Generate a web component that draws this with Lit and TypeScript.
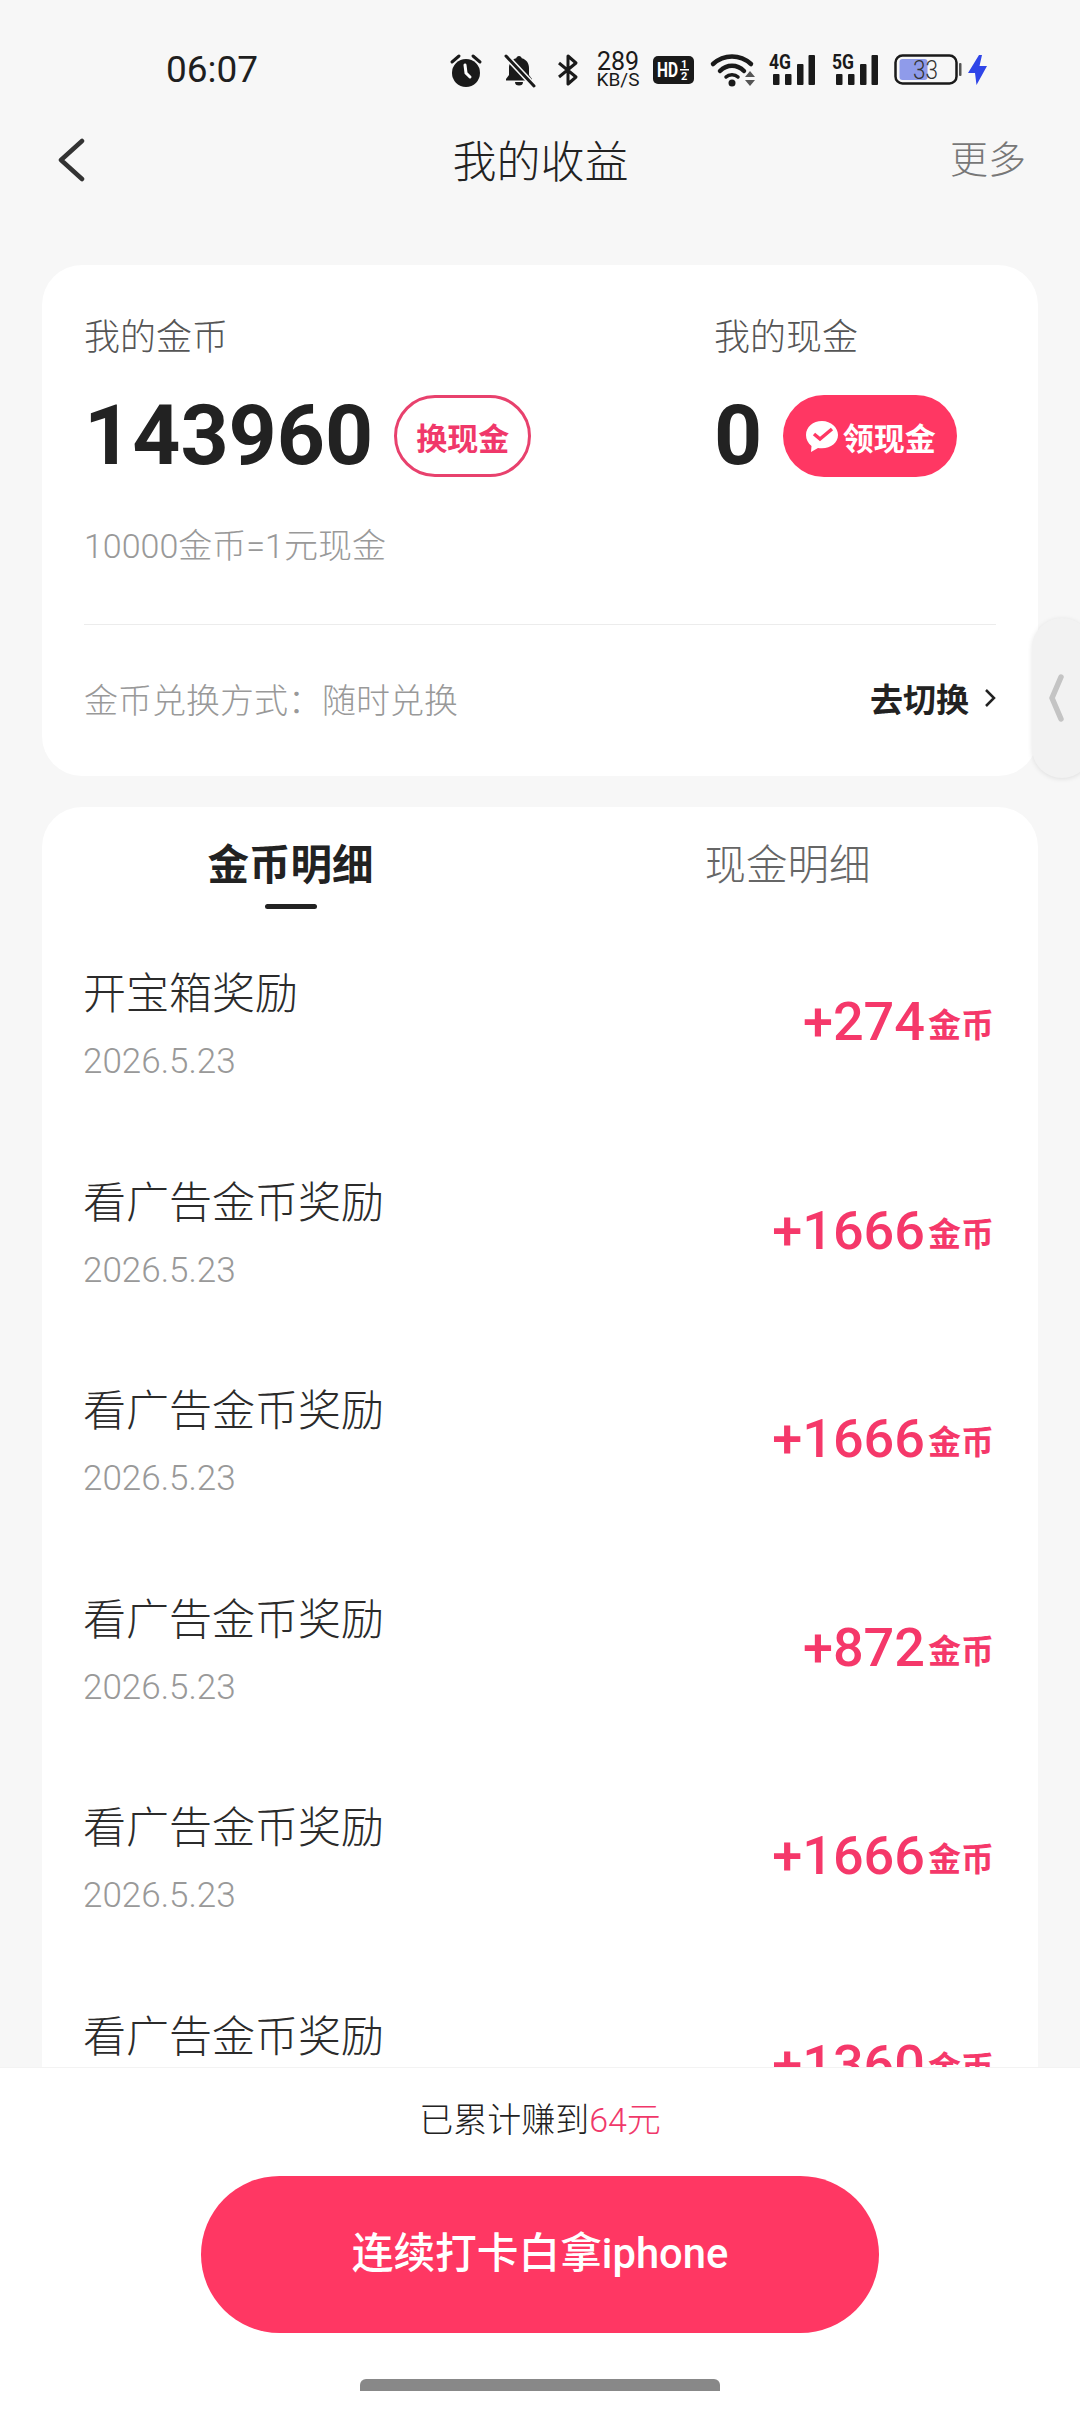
import { LitElement, html, css } from "lit";
import { customElement } from "lit/decorators.js";

const rows = [
  ["开宝箱奖励", "+274"],
  ["看广告金币奖励", "+1666"],
  ["看广告金币奖励", "+1666"],
  ["看广告金币奖励", "+872"],
  ["看广告金币奖励", "+1666"],
  ["看广告金币奖励", "+1360"],
];

const signal = (label: string, cls: string) => html`<svg class="sig ${cls}" width="46" height="32" viewBox="0 0 46 32">
  <text x="0" y="15" font-family="Roboto" font-weight="700" font-size="20" textLength="22" lengthAdjust="spacingAndGlyphs" fill="#1a1a1a">${label}</text>
  <rect x="4" y="20" width="6.500" height="11" rx="1" fill="#1a1a1a"/>
  <rect x="16" y="20" width="6.500" height="11" rx="1" fill="#1a1a1a"/>
  <rect x="28" y="10" width="6.500" height="21" rx="1" fill="#1a1a1a"/>
  <rect x="39.500" y="1" width="6.500" height="30" rx="1" fill="#1a1a1a"/>
</svg>`;

@customElement("app-root")
export class AppRoot extends LitElement {
  static styles = css`
    :host {
      display: flex;
      flex-direction: column;
      position: relative;
      width: 1080px;
      height: 2412px;
      overflow: hidden;
      background: #f7f7f7;
      font-family: Roboto, "Noto Sans CJK SC", sans-serif;
      color: #333;
    }
    .status {
      height: 108px;
      flex: none;
      display: flex;
      align-items: center;
      padding: 32px 0 0 166px;
      box-sizing: border-box;
    }
    .time { font-size: 37px; color: #1f1f1f; width: 284px; line-height: 40px; }
    .sicons { display: flex; align-items: center; height: 40px; }
    .sicons svg { display: block; flex: none; overflow: visible; }
    .sig.a { margin-left: 13px; }
    .sig.b { margin-left: 17px; }
    .bell { margin-left: 21px; }
    .bt { margin-left: 21px; }
    .wifi { margin-left: 17px; }
    .batt { margin-left: 16px; }
    .speed { width: 42px; margin: 0 14px 0 18px; color: #1a1a1a; text-align: center; display: flex; flex-direction: column; align-items: center; }
    .speed b { font-weight: 400; font-size: 25px; line-height: 20px; }
    .speed i { font-style: normal; font-size: 19px; line-height: 16px; white-space: nowrap; }
    .nav {
      height: 104px;
      flex: none;
      display: grid;
      grid-template-columns: 1fr auto 1fr;
      align-items: center;
      padding: 0 54px 0 58px;
    }
    .nav h1 { margin: 0 3px 3px 0; font-size: 44px; font-weight: 300; color: #222; }
    .more { justify-self: end; font-size: 38px; color: #777; font-weight: 300; margin-bottom: 8px; }
    .scroll { flex: 1; min-height: 0; overflow: hidden; padding: 53px 42px 0; }
    .card { background: #fff; border-radius: 40px; }
    .summary { height: 511px; box-sizing: border-box; padding: 49px 42px 0; }
    .cols { display: grid; grid-template-columns: 630px 1fr; }
    .label { font-size: 36px; font-weight: 300; color: #555; line-height: 48px; }
    .val { display: flex; align-items: center; height: 82px; margin-top: 33px; }
    .num { font-size: 84px; font-weight: 700; color: #222; line-height: 82px; }
    .pill {
      height: 82px;
      border-radius: 41px;
      box-sizing: border-box;
      display: flex;
      align-items: center;
      justify-content: center;
      font-size: 31px;
      font-weight: 700;
    }
    .outline { width: 137px; margin-left: 21px; border: 3px solid #e8416d; color: #f0386a; }
    .solid { width: 174px; margin-left: 21px; background: #ff3763; color: #fff; gap: 4px; }
    .hint { font-size: 34px; font-weight: 300; color: #999; line-height: 44px; margin-top: 47px; }
    .divider { height: 1px; background: #ececec; margin-top: 56px; }
    .foot { display: flex; justify-content: space-between; align-items: center; height: 146px; }
    .foot .mode { font-size: 34px; font-weight: 300; color: #999; }
    .switch { display: flex; align-items: center; gap: 15px; font-size: 33px; font-weight: 700; color: #222; }
    .detail { margin-top: 31px; height: 1400px; }
    .tabs { display: grid; grid-template-columns: 1fr 1fr; text-align: center; padding-top: 35px; margin-right: 2px; }
    .tab { font-size: 41.500px; font-weight: 300; color: #666; line-height: 48px; height: 67px; position: relative; }
    .tab.on { font-weight: 700; color: #222; }
    .tab.on::after {
      content: "";
      position: absolute;
      left: 50%;
      bottom: 0;
      transform: translateX(-50%);
      width: 52px;
      height: 5px;
      border-radius: 3px;
      background: #222;
    }
    .row {
      height: 208.6px;
      box-sizing: border-box;
      padding: 57px 44px 0 41px;
      display: flex;
      justify-content: space-between;
    }
    .row h3 { margin: 0; font-size: 43px; font-weight: 300; color: #2b2b2b; line-height: 56px; }
    .row .date { font-size: 35px; font-weight: 300; color: #999; line-height: 40px; margin-top: 20px; }
    .amt { display: flex; align-items: baseline; color: #f5386a; align-self: flex-start; margin-top: 24px; line-height: 64px; }
    .amt b { font-size: 54px; font-weight: 500; }
    .amt span { font-size: 33px; font-weight: 700; margin-left: 3px; transform: translateY(-3px); }
    .bottom {
      flex: none;
      height: 345px;
      background: #fff;
      border-top: 1px solid #f3f3f3;
      box-sizing: border-box;
      display: flex;
      flex-direction: column;
      align-items: center;
    }
    .total { font-size: 34px; font-weight: 300; color: #222; line-height: 44px; margin-top: 30px; }
    .total em { font-style: normal; color: #f0386a; }
    .cta {
      width: 678px;
      height: 157px;
      margin-top: 34px;
      padding-bottom: 9px;
      box-sizing: border-box;
      border-radius: 79px;
      background: #ff3763;
      color: #fff;
      display: flex;
      align-items: center;
      justify-content: center;
      font-size: 41.700px;
      font-weight: 500;
    }
    .home { width: 360px; height: 12px; margin-top: 46px; background: #888; border-radius: 6px 6px 0 0; }
    .side {
      position: absolute;
      left: 1032px;
      top: 618px;
      width: 60px;
      height: 160px;
      box-sizing: border-box;
      background: #f2f2f2;
      border-radius: 30px;
      box-shadow: 0 1px 5px rgba(0, 0, 0, 0.1);
      display: flex;
      align-items: center;
      padding-left: 16px;
    }
  `;

  render() {
    return html`
      <div class="status">
        <div class="time">06:07</div>
        <div class="sicons">
          <svg width="32" height="34" viewBox="0 0 32 34">
            <circle cx="16" cy="20" r="14" fill="#1a1a1a"/>
            <path d="M2 9 9 3M30 9 23 3" stroke="#1a1a1a" stroke-width="3" stroke-linecap="round"/>
            <path d="M15 12 16 20 20 24" stroke="#fff" stroke-width="3" fill="none" stroke-linecap="round"/>
          </svg>
          <svg class="bell" width="33" height="33" viewBox="0 0 33 33">
            <path d="M16 2c1.500 0 2.500 1 2.800 2.300C23.500 5.500 26 9.500 26 14v7l3 4v1.500H3V25l3-4v-7c0-4.500 2.500-8.500 7.200-9.700C13.500 3 14.500 2 16 2z" fill="#1a1a1a"/>
            <path d="M12 28h8a4 3.500 0 0 1-8 0z" fill="#1a1a1a"/>
            <path d="M2 1 31 32" stroke="#f7f7f7" stroke-width="6"/>
            <path d="M3 2 31 32" stroke="#1a1a1a" stroke-width="3" stroke-linecap="round"/>
          </svg>
          <svg class="bt" width="22" height="32" viewBox="0 0 22 32">
            <path d="M2 9 19 23 11 30V2L19 9 2 23" fill="none" stroke="#1a1a1a" stroke-width="3" stroke-linejoin="round"/>
          </svg>
          <div class="speed"><b>289</b><i>KB/S</i></div>
          <svg width="41" height="28" viewBox="0 0 41 28">
            <rect width="41" height="28" rx="5" fill="#1a1a1a"/>
            <text x="4" y="21" font-family="Roboto" font-weight="700" font-size="20" textLength="21" lengthAdjust="spacingAndGlyphs" fill="#fff">HD</text>
            <text x="28" y="12" font-family="Roboto" font-weight="700" font-size="11" fill="#fff">1</text>
            <rect x="27" y="13" width="9" height="1.500" fill="#fff"/>
            <text x="28" y="24" font-family="Roboto" font-weight="700" font-size="11" fill="#fff">2</text>
          </svg>
          <svg class="wifi" width="45" height="34" viewBox="0 0 45 34">
            <path d="M2 11C13 1 29 1 40 11" fill="none" stroke="#1a1a1a" stroke-width="4.500" stroke-linecap="round"/>
            <path d="M9 18C16 11 26 11 33 18" fill="none" stroke="#1a1a1a" stroke-width="4.500" stroke-linecap="round"/>
            <path d="M15 24C18 21 24 21 27 24" fill="none" stroke="#1a1a1a" stroke-width="3.500" stroke-linecap="round"/>
            <circle cx="21" cy="30" r="3.500" fill="#1a1a1a"/>
            <path d="M39 18 44 24H34zM34 27H44L39 33z" fill="#555"/>
          </svg>
          ${signal("4G", "a")}
          ${signal("5G", "b")}
          <svg class="batt" width="94" height="32" viewBox="0 0 94 32">
            <rect x="1.500" y="1.500" width="61" height="28" rx="7" fill="none" stroke="#1a1a1a" stroke-width="2.500"/>
            <rect x="5.500" y="5" width="28" height="21" rx="3" fill="#8f9bea"/>
            <text x="19" y="25" font-family="Roboto" font-size="25" font-weight="300" textLength="25" lengthAdjust="spacingAndGlyphs" fill="#333">33</text>
            <rect x="65" y="9" width="2.500" height="13" rx="1" fill="#555"/>
            <path d="M85 1 74 19H81L82.500 31 93 12H85.500L88 1Z" fill="#2f45e8"/>
          </svg>
        </div>
      </div>
      <div class="nav">
        <svg width="28" height="44" viewBox="0 0 28 44">
          <path d="M24 3 3 22 24 41" fill="none" stroke="#333" stroke-width="4.500" stroke-linecap="round" stroke-linejoin="round"/>
        </svg>
        <h1>我的收益</h1>
        <div class="more">更多</div>
      </div>
      <div class="scroll">
        <div class="card summary">
          <div class="cols">
            <div>
              <div class="label">我的金币</div>
              <div class="val">
                <div class="num">143960</div>
                <div class="pill outline">换现金</div>
              </div>
            </div>
            <div>
              <div class="label">我的现金</div>
              <div class="val">
                <div class="num">0</div>
                <div class="pill solid">
                  <svg width="34" height="34" viewBox="0 0 34 34">
                    <path d="M17 2C8 2 1 8 1 16c0 4.500 2 8 5.500 11L6 33l7-4c1 .2 2.500.3 4 .3 9 0 16-6 16-13.300S26 2 17 2z" fill="#fff"/>
                    <path d="M9 15l6 5L27 10" fill="none" stroke="#ff3763" stroke-width="3.500"/>
                  </svg>
                  领现金
                </div>
              </div>
            </div>
          </div>
          <div class="hint">10000金币=1元现金</div>
          <div class="divider"></div>
          <div class="foot">
            <div class="mode">金币兑换方式：随时兑换</div>
            <div class="switch">去切换
              <svg width="12" height="20" viewBox="0 0 12 20">
                <path d="M2 2 10 10 2 18" fill="none" stroke="#222" stroke-width="2.500"/>
              </svg>
            </div>
          </div>
        </div>
        <div class="card detail">
          <div class="tabs">
            <div class="tab on">金币明细</div>
            <div class="tab">现金明细</div>
          </div>
          ${rows.map(
            ([t, a]) => html`<div class="row">
              <div>
                <h3>${t}</h3>
                <div class="date">2026.5.23</div>
              </div>
              <div class="amt"><b>${a}</b><span>金币</span></div>
            </div>`
          )}
        </div>
      </div>
      <div class="bottom">
        <div class="total">已累计赚到<em>64元</em></div>
        <div class="cta">连续打卡白拿iphone</div>
        <div class="home"></div>
      </div>
      <div class="side">
        <svg width="16" height="48" viewBox="0 0 16 48">
          <path d="M13 3 4 24 13 45" fill="none" stroke="#c4c4c4" stroke-width="5.500" stroke-linecap="round" stroke-linejoin="round"/>
        </svg>
      </div>
    `;
  }
}
